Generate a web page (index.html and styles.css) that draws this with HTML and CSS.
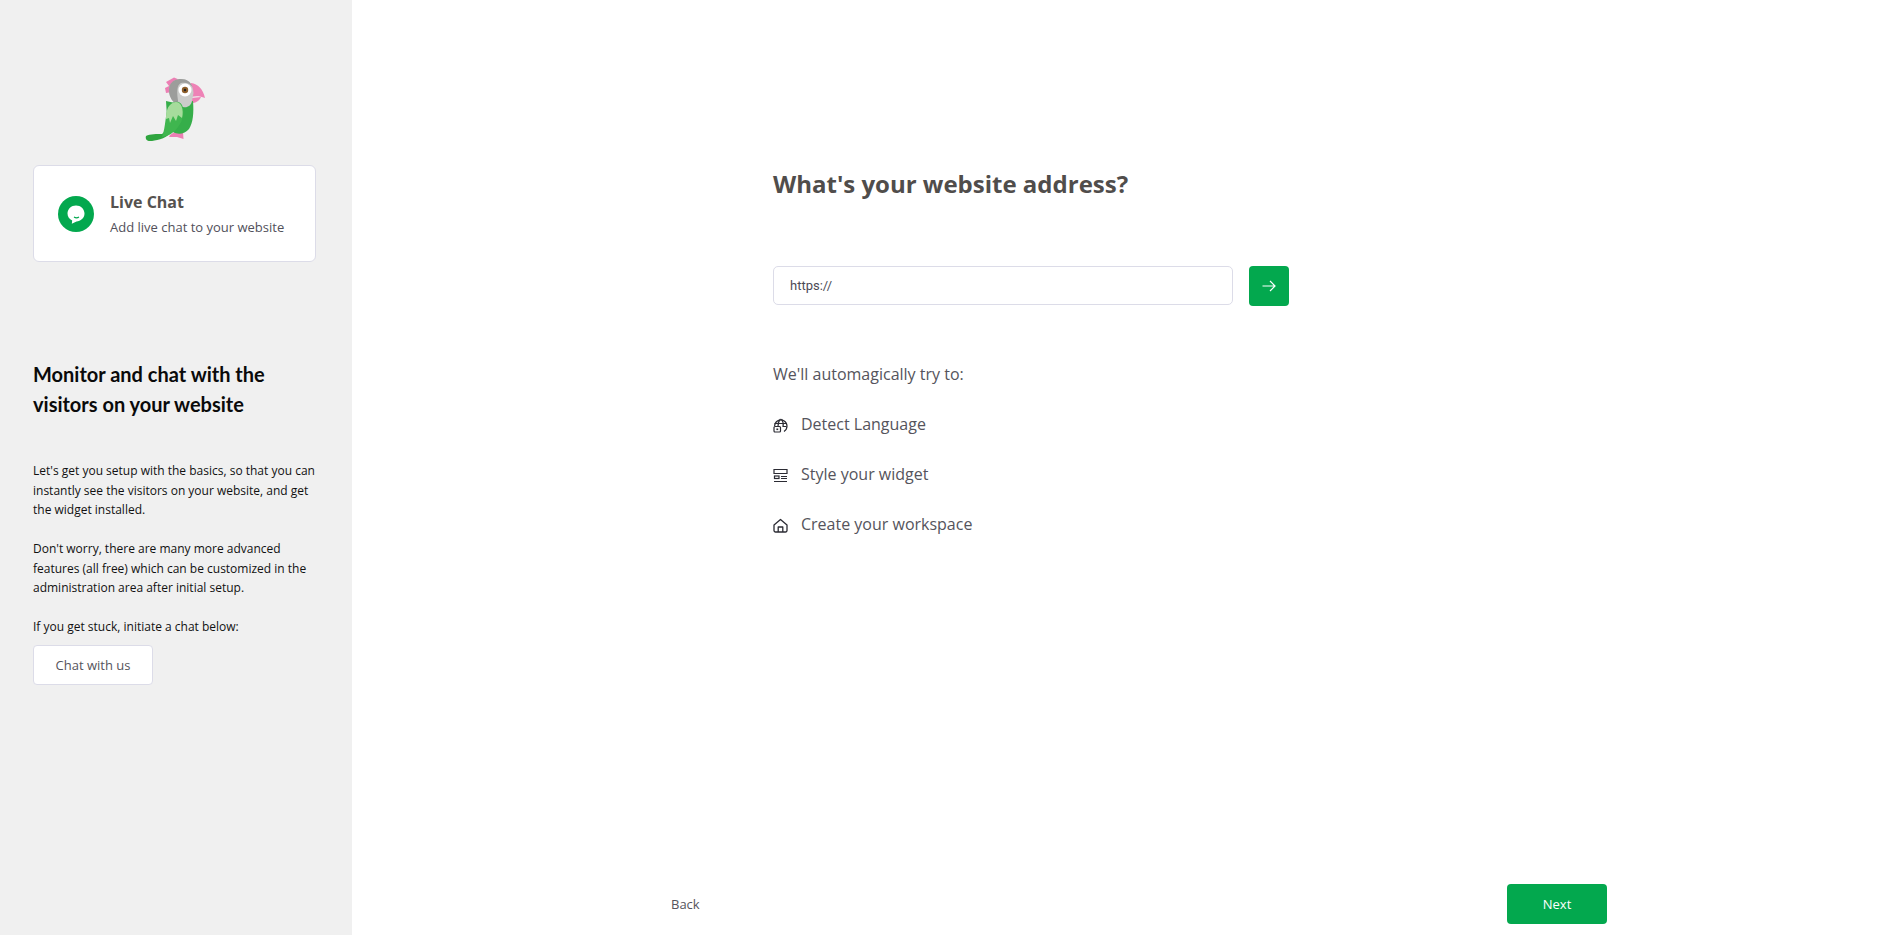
FILE: index.html
```html
<!DOCTYPE html>
<html lang="en">
<head>
<meta charset="utf-8">
<title>Setup</title>
<link rel="stylesheet" href="styles.css">
</head>
<body>
<div class="app">
  <aside class="side">
    <div class="logo">
      <svg width="60" height="64" viewBox="0 0 60 64">
        <path d="M21 5 L29 0.5 L35 3 L34 10 L27 15 L21 16 L20 11 L24 9 Z" fill="#ec7fb4"/>
        <path d="M46 6 C53 7 58 12 60 21 C55 19 51 19 46 20 Z" fill="#ee82b6"/>
        <path d="M46 21 L56 20 C54 24 51 26 46 26 Z" fill="#ee82b6"/>
        <path d="M25 58 L31 54 L38 55 L38.500 62 L32 60 L24 60 Z" fill="#ec7fb4"/>
        <path d="M1 59 C5 57 12 57 17 57 L28 46 L26 56 C20 62 10 64 5 64 C2 64 0 62 1 59 Z" fill="#2fa53f"/>
        <path d="M21 24 L30 26 L48 24 C49 36 48 46 44 52 C40 57 33 58 28 55 L22 40 Z" fill="#36ae4a"/>
        <path d="M24 12 C25 6 30 2 36 2 C44 2 48 8 48.500 16 L47 24 C46 29 42 31 38 30 C30 28 24 22 24 12 Z" fill="#cbccca"/>
        <path d="M25 8 C27 4 31 2 36 2 C42 2 46 5 47.500 10 C45 6 40 5 36 6 C32 8 31 14 34 29 C28 26 24 20 24 14 C24 12 24 10 25 8 Z" fill="#9c9d9b"/>
        <circle cx="40" cy="13" r="6.500" fill="#fff"/>
        <circle cx="40" cy="13" r="3.200" fill="#8d5f2a"/>
        <circle cx="40" cy="13" r="1.200" fill="#222"/>
        <path d="M17 60 C21 50 20 36 24 29 C28 24 34 23 37 28 C40 34 38 44 33 50 C29 56 23 59 17 60 Z" fill="#3fb64f"/>
        <path d="M21 42 C21 36 22 31 25 28 C29 24 34 24 36.500 29 C38 33 38 37 37 41 L33 38 L31 44 L28 39 L25 46 L24 41 Z" fill="#a6dc9c"/>
      </svg>
    </div>
    <div class="card">
      <span class="card-icon">
        <svg width="18" height="20" viewBox="0 0 18 20">
          <path d="M9 0.5 C13.7 0.5 17.5 4 17.5 8.6 C17.5 13.3 13.6 16 9.5 16.6 L4.8 18.8 L5.2 15.6 C2.4 14.3 0.5 11.8 0.5 8.6 C0.5 4 4.3 0.5 9 0.5 Z" fill="#fff"/>
          <path d="M7 12 C8.5 13 10.5 13 12 12" fill="none" stroke="#03a84e" stroke-width="1.1"/>
        </svg>
      </span>
      <div class="card-text">
        <div class="card-title">Live Chat</div>
        <div class="card-sub">Add live chat to your website</div>
      </div>
    </div>
    <h2 class="side-title">Monitor and chat with the visitors on your website</h2>
    <div class="side-body">
      <p>Let's get you setup with the basics, so that you can instantly see the visitors on your website, and get the widget installed.</p>
      <p>Don't worry, there are many more advanced features (all free) which can be customized in the administration area after initial setup.</p>
      <p class="last">If you get stuck, initiate a chat below:</p>
    </div>
    <button class="chat-btn">Chat with us</button>
  </aside>
  <main class="main">
    <div class="content">
      <h1 class="heading">What's your website address?</h1>
      <div class="url-row">
        <div class="url-input">https://</div>
        <button class="go-btn">
          <svg width="14" height="12" viewBox="0 0 14 12"><path d="M0.5 6 H13 M8 1 L13 6 L8 11" fill="none" stroke="#fff" stroke-width="1.2"/></svg>
        </button>
      </div>
      <div class="try">We'll automagically try to:</div>
      <ul class="list">
        <li>
          <svg class="li-icon" width="15" height="15" viewBox="0 0 15 15" fill="none" stroke="#2b2b33" stroke-width="1.2"><path d="M1.6 8 A6.2 6.2 0 1 1 11 13.4"/><path d="M1.5 5.5 H13.5 M7.5 1 C5.5 3 5 5 5 8 M8.5 1 C10.2 3.5 10.6 6 10 9 M13.5 8.5 H9.5"/><rect x="1" y="8.5" width="6.5" height="5.5" rx="1"/><rect x="3.4" y="10.5" width="1.8" height="1.6" fill="#2b2b33" stroke="none"/></svg>
          Detect Language
        </li>
        <li>
          <svg class="li-icon" width="15" height="15" viewBox="0 0 15 15" fill="none" stroke="#2b2b33" stroke-width="1.2"><path d="M1 1.5 H14 V5.5 H1 Z"/><rect x="1.5" y="8" width="4.5" height="2.5"/><path d="M8 8.5 H14 M8 10.5 H14 M1 13.5 H14"/></svg>
          Style your widget
        </li>
        <li>
          <svg class="li-icon" width="15" height="15" viewBox="0 0 15 15" fill="none" stroke="#2b2b33" stroke-width="1.3" stroke-linejoin="round"><path d="M1 7 L7.5 1.5 L14 7 V12.5 A1.5 1.5 0 0 1 12.5 14 H2.5 A1.5 1.5 0 0 1 1 12.5 Z"/><path d="M5.2 14 V9 H9.8 V14"/></svg>
          Create your workspace
        </li>
      </ul>
    </div>
    <div class="footer">
      <a class="back">Back</a>
      <button class="next">Next</button>
    </div>
  </main>
</div>
</body>
</html>
```
FILE: styles.css
```css
* { box-sizing: border-box; }
html, body { margin: 0; height: 100%; }
body { font-family: "Open Sans", sans-serif; color: #4c4a48; background: #fff; overflow: hidden; }
.app { display: flex; height: 935px; }
.side { width: 352px; flex: none; background: #f0f0f0; padding: 77px 36px 0 33px; display: flex; flex-direction: column; align-items: flex-start; }
.logo { width: 100%; display: flex; justify-content: center; height: 88px; }
.card { width: 283px; height: 97px; background: #fff; border: 1px solid #dcdce8; border-radius: 6px; display: flex; align-items: center; padding: 0 0 0 24px; }
.card-icon { width: 36px; height: 36px; border-radius: 50%; background: #03a84e; display: flex; align-items: center; justify-content: center; flex: none; padding-top: 2px; }
.card-text { margin-left: 16px; }
.card-title { font-size: 16px; font-weight: 700; line-height: 22px; color: #55524f; }
.card-sub { font-size: 13px; line-height: 18px; margin-top: 5px; color: #51505a; }
.side-title { font-family: Lato, sans-serif; font-weight: 700; font-size: 20px; line-height: 30px; color: #0a0a0a; margin: 97px 0 0; }
.side-body { font-size: 12px; line-height: 19.6px; color: #111; margin-top: 42px; width: 283px; }
.side-body p { margin: 0 0 19.4px; }
.side-body p.last { margin: 0; }
.chat-btn { margin-top: 8px; width: 120px; height: 40px; background: #fff; border: 1px solid #dcdce8; border-radius: 4px; font: 13px "Open Sans", sans-serif; color: #55545c; padding: 0; }
.main { flex: 1; display: flex; flex-direction: column; }
.content { flex: 1; padding: 166px 0 0 421px; }
.heading { margin: 0; font-size: 24px; font-weight: 700; line-height: 36px; color: #504d4b; }
.url-row { display: flex; margin-top: 64px; align-items: flex-start; }
.url-input { width: 460px; height: 39px; border: 1px solid #dcdce8; border-radius: 5px; font: 13px/37px Roboto, sans-serif; padding-left: 16px; color: #4c4a55; }
.go-btn { width: 40px; height: 40px; margin-left: 16px; background: #03a84e; border: 0; border-radius: 4px; padding: 0; display: flex; align-items: center; justify-content: center; }
.try { margin-top: 57px; font-size: 16px; line-height: 22px; color: #55545c; }
.list { list-style: none; margin: 28px 0 0; padding: 0; }
.list li { display: flex; align-items: center; height: 22px; margin-bottom: 28px; font-size: 16px; line-height: 22px; color: #55545c; }
.li-icon { width: 15px; height: 15px; margin-right: 13px; flex: none; margin-top: 2px; }
.footer { height: 51px; flex: none; padding: 0 290px 0 319px; display: flex; justify-content: space-between; align-items: flex-start; }
.back { font-size: 13px; line-height: 18px; margin-top: 11px; color: #55545c; }
.next { width: 100px; height: 40px; background: #03a84e; color: #fff; border: 0; border-radius: 4px; font: 500 13px "Open Sans", sans-serif; padding: 0; }
```
